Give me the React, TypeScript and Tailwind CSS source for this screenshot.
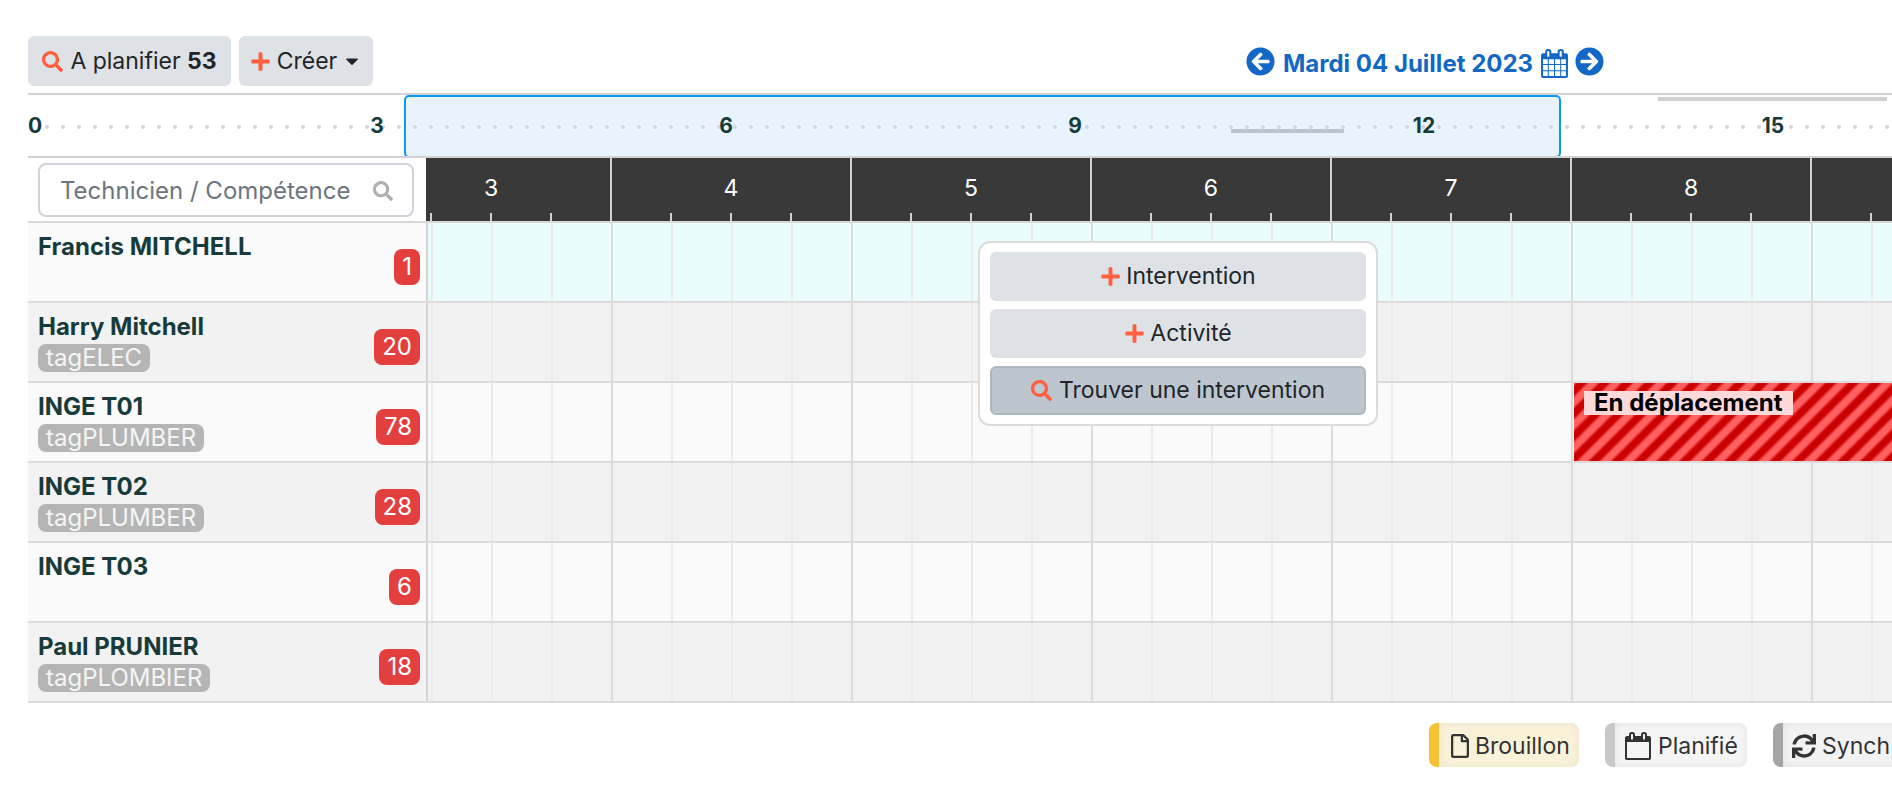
import { FaArrowCircleLeft, FaArrowCircleRight, FaCaretDown, FaPlus, FaRegFile, FaSearch, FaSync } from "react-icons/fa";

const technicians = [
  { name: "Francis MITCHELL", count: 1, tag: "" },
  { name: "Harry Mitchell", count: 20, tag: "tagELEC" },
  { name: "INGE T01", count: 78, tag: "tagPLUMBER" },
  { name: "INGE T02", count: 28, tag: "tagPLUMBER" },
  { name: "INGE T03", count: 6, tag: "" },
  { name: "Paul PRUNIER", count: 18, tag: "tagPLOMBIER" },
];

// last column runs off the screen, its number is not visible
const days = ["3", "4", "5", "6", "7", "8", ""];
const hourMarks = [3, 6, 9, 12, 15];
const dots = Array.from({ length: 116 }, (_, i) => i);
const slots = Array.from({ length: 25 }, (_, i) => i);

// font-awesome 4 shapes, not in react-icons
const CalendarFull = ({ className }: { className: string }) => (
  <svg viewBox="0 0 1792 1792" fill="currentColor" className={className}>
    <path d="M192 1664h288v-288h-288v288zm352 0h320v-288h-320v288zm-352-352h288v-320h-288v320zm352 0h320v-320h-320v320zm-352-384h288v-288h-288v288zm736 736h320v-288h-320v288zm-384-736h320v-288h-320v288zm768 736h288v-288h-288v288zm-384-352h320v-320h-320v320zm-352-864v-288q0-13-9.5-22.5t-22.5-9.5h-64q-13 0-22.5 9.5t-9.5 22.5v288q0 13 9.5 22.5t22.5 9.5h64q13 0 22.5-9.5t9.5-22.5zm736 864h288v-320h-288v320zm-384-384h320v-288h-320v288zm384 0h288v-288h-288v288zm32-480v-288q0-13-9.5-22.5t-22.5-9.5h-64q-13 0-22.5 9.5t-9.5 22.5v288q0 13 9.5 22.5t22.5 9.5h64q13 0 22.5-9.5t9.5-22.5zm384-64v1280q0 52-38 90t-90 38h-1408q-52 0-90-38t-38-90v-1280q0-52 38-90t90-38h128v-96q0-66 47-113t113-47h64q66 0 113 47t47 113v96h384v-96q0-66 47-113t113-47h64q66 0 113 47t47 113v96h128q52 0 90 38t38 90z" />
  </svg>
);

const CalendarOutline = ({ className }: { className: string }) => (
  <svg viewBox="0 0 1792 1792" fill="currentColor" className={className}>
    <path d="M192 1664h1408v-1024h-1408v1024zm384-1216v-288q0-14-9-23t-23-9h-64q-14 0-23 9t-9 23v288q0 14 9 23t23 9h64q14 0 23-9t9-23zm768 0v-288q0-14-9-23t-23-9h-64q-14 0-23 9t-9 23v288q0 14 9 23t23 9h64q14 0 23-9t9-23zm384-64v1280q0 52-38 90t-90 38h-1408q-52 0-90-38t-38-90v-1280q0-52 38-90t90-38h128v-96q0-66 47-113t113-47h64q66 0 113 47t47 113v96h384v-96q0-66 47-113t113-47h64q66 0 113 47t47 113v96h128q52 0 90 38t38 90z" />
  </svg>
);

const App = () => {
  return (
    <div className="w-[1892px] h-[788px] overflow-hidden bg-white pt-[36px] font-['Inter',sans-serif] text-[#212529]">
      {/* Toolbar */}
      <div className="flex items-center pl-[28px] h-[50px]">
        <button className="flex items-center justify-center w-[203px] h-[50px] bg-[#dee2e6] rounded-md text-[23px]">
          <FaSearch className="text-[#ff5f3c] text-[21px] mr-[7px]" />
          <span>
            A planifier <b className="font-bold">53</b>
          </span>
        </button>
        <button className="flex items-center justify-center w-[134px] h-[50px] ml-[8px] bg-[#dee2e6] rounded-md text-[23px]">
          <FaPlus className="text-[#ff5f3c] text-[21px] mr-[6px]" />
          <span>Créer</span>
          <FaCaretDown className="text-[20px] ml-[5px]" />
        </button>

        <div className="flex items-center ml-[873px] text-[#1268c4]">
          <FaArrowCircleLeft className="text-[29px]" />
          <span className="ml-[8px] mt-[6px] text-[24px] font-bold whitespace-nowrap">Mardi 04 Juillet 2023</span>
          <CalendarFull className="w-[29px] h-[29px] ml-[7px] mt-[4px]" />
          <FaArrowCircleRight className="text-[29px] ml-[6px]" />
        </div>
      </div>

      {/* Timeline */}
      <div className="relative mt-[7px] ml-[28px] h-[65px] border-y-2 border-[#d2d2d2] overflow-hidden">
        <div className="absolute left-[376px] top-0 w-[1157px] h-[63px] bg-[#e8f3fd] border-2 border-[#0a9cf5] rounded-[5px]" />
        <div className="absolute left-[1630px] top-[2px] w-[229px] h-[4px] bg-[#cfcfcf]" />
        <div className="absolute left-[17px] top-[30px] flex gap-[12px]">
          {dots.map((d) => (
            <span key={d} className="w-[4px] h-[4px] rounded-full bg-[#d2d6da] shrink-0" />
          ))}
        </div>
        <div className="absolute left-[1203px] top-[34px] w-[113px] h-[4px] bg-[#bdc6ce]" />
        <div className="relative flex items-center h-full text-[21px] font-bold text-[#173b3b]">
          <span className="w-[174.5px] shrink-0">0</span>
          {hourMarks.map((h) => (
            <span key={h} className="w-[349px] shrink-0 text-center">
              {h}
            </span>
          ))}
        </div>
      </div>

      {/* Header */}
      <div className="flex ml-[28px] h-[65px] border-b-2 border-[#d8d8d8]">
        <div className="w-[398px] shrink-0 pl-[10px] pt-[5px]">
          <div className="flex items-center justify-between w-[376px] h-[54px] border-2 border-[#ced4da] rounded-lg pl-[20px] pr-[19px] pt-[2px] text-[24px] text-[#6c757d]">
            <span>Technicien / Compétence</span>
            <FaSearch className="text-[#b0b0b0] text-[20px]" />
          </div>
        </div>
        <div className="flex flex-1 min-w-0 overflow-hidden bg-[#383838] text-white text-[23px]">
          {days.map((d) => (
            <div key={d} className="relative flex items-center justify-center w-[240px] h-[63px] shrink-0 border-r-2 border-[#d0d0d0] first:-ml-[54px]">
              <span className="-mt-[2px]">{d}</span>
              <div className="absolute bottom-0 left-0 flex">
                <span className="w-[60px] h-[8px] border-r-2 border-[#d0d0d0]" />
                <span className="w-[60px] h-[8px] border-r-2 border-[#d0d0d0]" />
                <span className="w-[60px] h-[8px] border-r-2 border-[#d0d0d0]" />
              </div>
            </div>
          ))}
        </div>
      </div>

      {/* Rows */}
      <div className="relative ml-[28px]">
        {technicians.map((t, i) => (
          <div key={t.name} className={`flex h-[80px] border-b-2 border-[#dcdcdc] ${i % 2 === 0 ? "bg-[#fafafa]" : "bg-[#f2f2f2]"}`}>
            <div className="relative w-[400px] shrink-0 border-r-2 border-[#d5d5d5] pl-[10px] pt-[11px]">
              <div className="text-[24px] leading-[26px] font-bold text-[#173b3b]">{t.name}</div>
              {t.tag && (
                <span className="inline-block mt-[4px] h-[28px] px-[8px] rounded-lg bg-[#b5b5b5] text-[#f5f5f5] text-[24px] leading-[27px]">
                  {t.tag}
                </span>
              )}
              <span className="absolute right-[6px] top-[26px] h-[36px] px-[8px] rounded-lg bg-[#e33f3f] text-white text-[24px] leading-[36px]">
                {t.count}
              </span>
            </div>
            <div className={`relative flex flex-1 min-w-0 overflow-hidden pl-[3px] ${i === 0 ? "bg-[#ebfcff]" : ""}`}>
              {slots.map((s) => (
                <div key={s} className={`w-[60px] shrink-0 border-l-2 ${s % 4 === 3 ? "border-[#dcdcdc]" : "border-[#ebebeb]"}`} />
              ))}
              {i === 2 && (
                <div className="absolute left-[1146px] top-0 right-0 h-full pl-[10px] pt-[8px] bg-[repeating-linear-gradient(-45deg,#cc0000_0px,#cc0000_5px,#ff6060_8px,#ff6060_13px,#cc0000_16px)]">
                  <span className="block w-[209px] h-[24px] pl-[10px] bg-[#fcd9d9] text-black text-[24px] leading-[24px] font-bold whitespace-nowrap">
                    En déplacement
                  </span>
                </div>
              )}
            </div>
          </div>
        ))}

        {/* Popup menu */}
        <div className="absolute left-[950px] top-[18px] w-[400px] h-[185px] flex flex-col gap-[8px] py-[9px] px-[10px] bg-white border-2 border-[#dcdcdc] rounded-xl text-[23px]">
          <button className="flex h-[49px] shrink-0 items-center justify-center bg-[#dee2e6] rounded-md">
            <FaPlus className="text-[#ff5f3c] text-[21px] mr-[5px]" />
            Intervention
          </button>
          <button className="flex h-[49px] shrink-0 items-center justify-center bg-[#dee2e6] rounded-md">
            <FaPlus className="text-[#ff5f3c] text-[21px] mr-[5px]" />
            Activité
          </button>
          <button className="flex h-[49px] shrink-0 items-center justify-center bg-[#bdc6ce] border-2 border-[#adb7c0] rounded-md">
            <FaSearch className="text-[#ff5f3c] text-[21px] mr-[7px]" />
            Trouver une intervention
          </button>
        </div>
      </div>

      {/* Legend */}
      <div className="flex gap-[26px] mt-[20px] ml-[1429px] text-[23px] text-[#333]">
        <div className="flex items-center shrink-0 w-[150px] h-[44px] pt-[2px] border-l-[10px] border-[#f5c231] rounded-lg bg-[#f9f2d9] pl-[9px] shadow-[inset_0_0_8px_rgba(0,0,0,0.06)]">
          <FaRegFile className="text-[24px] mr-[3px]" />
          Brouillon
        </div>
        <div className="flex items-center shrink-0 w-[142px] h-[44px] pt-[2px] border-l-[10px] border-[#c8c8c8] rounded-lg bg-[#f5f5f5] pl-[9px] shadow-[inset_0_0_8px_rgba(0,0,0,0.08)]">
          <CalendarOutline className="w-[28px] h-[28px] mr-[6px]" />
          Planifié
        </div>
        <div className="flex items-center shrink-0 w-[142px] h-[44px] pt-[2px] border-l-[10px] border-[#a5a5a5] rounded-lg bg-[#f2f2f2] pl-[9px] shadow-[inset_0_0_8px_rgba(0,0,0,0.08)]">
          <FaSync className="text-[24px] mr-[6px]" />
          Synch
        </div>
      </div>
    </div>
  );
};

export default App;
